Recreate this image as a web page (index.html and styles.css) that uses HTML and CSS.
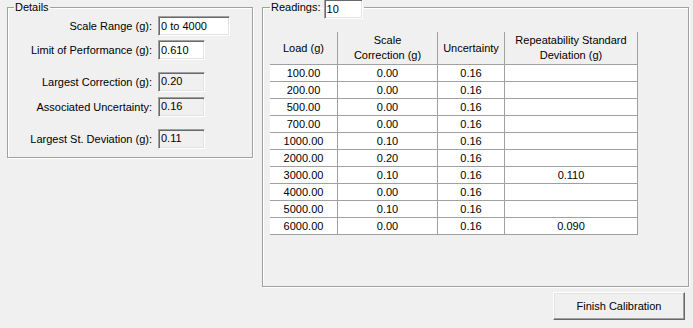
FILE: index.html
```html
<!DOCTYPE html>
<html lang="en">

<head>
    <meta charset="UTF-8">
    <meta name="viewport" content="width=device-width, initial-scale=1.0">
    <title>Calibration</title>
    <link rel="stylesheet" href="styles.css">
</head>

<body>
    <div class="page">
        <fieldset class="group details">
            <legend>Details</legend>
            <div class="row">
                <label>Scale Range (g):</label>
                <input class="field wide" type="text" value="0 to 4000">
            </div>
            <div class="row">
                <label>Limit of Performance (g):</label>
                <input class="field" type="text" value="0.610">
            </div>
            <div class="row spaced">
                <label>Largest Correction (g):</label>
                <span class="field readonly">0.20</span>
            </div>
            <div class="row near">
                <label>Associated Uncertainty:</label>
                <span class="field readonly">0.16</span>
            </div>
            <div class="row spaced">
                <label>Largest St. Deviation (g):</label>
                <span class="field readonly">0.11</span>
            </div>
        </fieldset>

        <div class="right">
            <fieldset class="group readings">
                <legend>Readings: <input class="field count" type="text" value="10"></legend>
                <table>
                    <tr>
                        <th class="c1">Load (g)</th>
                        <th class="c2">Scale<br>Correction (g)</th>
                        <th class="c3">Uncertainty</th>
                        <th class="c4">Repeatability Standard<br>Deviation (g)</th>
                    </tr>
                    <tr><td>100.00</td><td>0.00</td><td>0.16</td><td></td></tr>
                    <tr><td>200.00</td><td>0.00</td><td>0.16</td><td></td></tr>
                    <tr><td>500.00</td><td>0.00</td><td>0.16</td><td></td></tr>
                    <tr><td>700.00</td><td>0.00</td><td>0.16</td><td></td></tr>
                    <tr><td>1000.00</td><td>0.10</td><td>0.16</td><td></td></tr>
                    <tr><td>2000.00</td><td>0.20</td><td>0.16</td><td></td></tr>
                    <tr><td>3000.00</td><td>0.10</td><td>0.16</td><td>0.110</td></tr>
                    <tr><td>4000.00</td><td>0.00</td><td>0.16</td><td></td></tr>
                    <tr><td>5000.00</td><td>0.10</td><td>0.16</td><td></td></tr>
                    <tr><td>6000.00</td><td>0.00</td><td>0.16</td><td>0.090</td></tr>
                </table>
            </fieldset>
            <button class="finish">Finish Calibration</button>
        </div>
    </div>
</body>

</html>
```

FILE: styles.css
```css
body {
    margin: 0;
    background: #f0f0f0;
    font-family: "Liberation Sans", Arial, sans-serif;
    font-size: 11px;
    color: #000;
}

.page {
    display: flex;
    align-items: flex-start;
    padding-left: 7px;
    width: 693px;
    height: 328px;
    box-sizing: border-box;
}

.group {
    margin: 0;
    border: 1px solid #a0a0a0;
    box-shadow: inset 1px 1px 0 #fff, 1px 1px 0 #fff;
    box-sizing: border-box;
}

.group legend {
    padding: 0 1px;
    margin-left: 6px;
    line-height: 14px;
    height: 14px;
}

.details {
    width: 246px;
    height: 158px;
    padding: 2px 0 0 0;
    display: flex;
    flex-direction: column;
}

.row {
    display: flex;
    align-items: center;
    height: 20px;
    margin-top: 4px;
}

.row:first-of-type {
    margin-top: 0;
}

.row.spaced {
    margin-top: 12px;
}

.row.near {
    margin-top: 5px;
}

.row label {
    width: 144px;
    text-align: right;
    margin-right: 6px;
}

.field {
    display: inline-block;
    box-sizing: border-box;
    height: 20px;
    width: 47px;
    padding: 0 2px;
    font: inherit;
    line-height: 16px;
    color: #000;
    background: #fff;
    border: 1px solid;
    border-color: #a0a0a0 #fff #fff #a0a0a0;
    box-shadow: inset 1px 1px 0 #696969, inset -1px -1px 0 #e3e3e3;
    outline: none;
}

.field.wide {
    width: 72px;
}

.field.readonly {
    background: #f0f0f0;
}

.right {
    display: flex;
    flex-direction: column;
    align-items: flex-end;
    margin-left: 9px;
}

.readings {
    width: 427px;
    height: 287px;
    padding: 18px 0 0 7px;
}

.readings legend {
    margin-left: 0;
}

.field.count {
    width: 39px;
    vertical-align: top;
    margin: -1px 0 -7px 0;
}

table {
    border-collapse: collapse;
    table-layout: fixed;
    width: 368px;
}

th {
    font-weight: normal;
    height: 32px;
    padding: 0;
    line-height: 15px;
    border-left: 1px solid #a0a0a0;
    border-bottom: 1px solid #a0a0a0;
    text-align: center;
}

th.c1 {
    border-left: none;
    width: 67px;
}

th.c2 {
    width: 99px;
}

th.c3 {
    width: 66px;
}

th.c4 {
    border-right: 1px solid #a0a0a0;
}

td {
    background: #fff;
    height: 16px;
    padding: 0;
    line-height: 16px;
    text-align: center;
    border: 1px solid #a0a0a0;
}

td:first-child {
    border-left: none;
}

.finish {
    margin: 5px 4px 0 0;
    width: 132px;
    height: 28px;
    font: inherit;
    background: #f0f0f0;
    border: 1px solid;
    border-color: #fff #696969 #696969 #fff;
    box-shadow: inset -1px -1px 0 #a0a0a0, inset 1px 1px 0 #e3e3e3;
    padding: 0;
}
```
